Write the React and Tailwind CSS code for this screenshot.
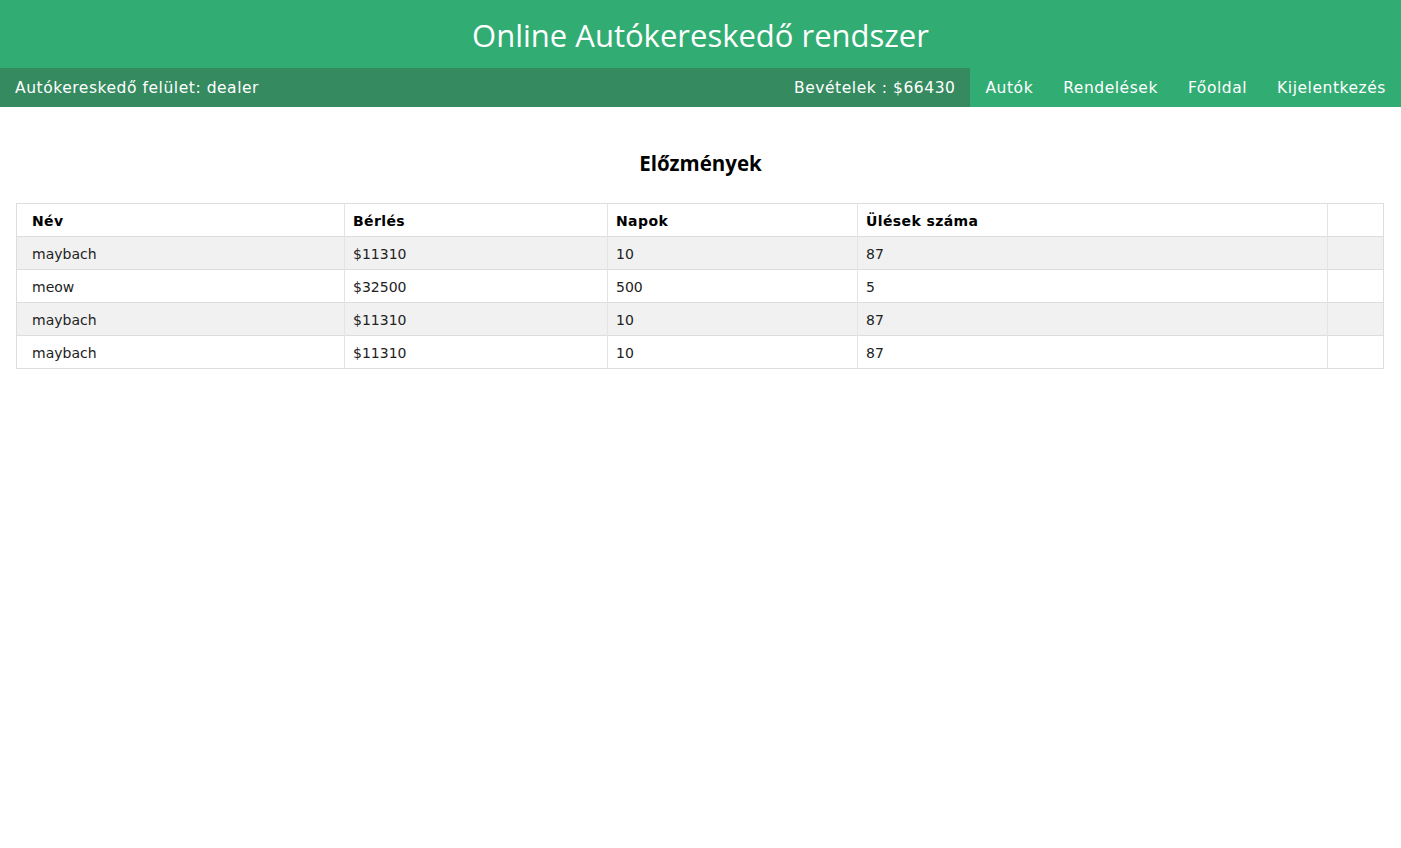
import React from "react";

const rows = [
  { name: "maybach", rent: "$11310", days: "10", seats: "87" },
  { name: "meow", rent: "$32500", days: "500", seats: "5" },
  { name: "maybach", rent: "$11310", days: "10", seats: "87" },
  { name: "maybach", rent: "$11310", days: "10", seats: "87" },
];

const navItems = ["Autók", "Rendelések", "Főoldal", "Kijelentkezés"];

function App() {
  return (
    <div className="min-h-screen bg-white font-['DejaVu_Sans',Verdana,sans-serif]">
      {/* HEADER */}
      <header className="h-[68px] bg-[#31ac73] flex items-center justify-center pt-[3px]">
        <h1 className="text-white text-[31px] font-['Open_Sans',sans-serif] font-normal">
          Online Autókereskedő rendszer
        </h1>
      </header>

      {/* NAV BAR */}
      <nav className="h-[39px] flex bg-[#358a60] text-white text-[15.5px] tracking-[0.55px]">
        <div className="flex-1 flex items-center pl-[15px] pt-[2px]">
          Autókereskedő felület: dealer
        </div>
        <div className="flex items-center px-[15px] pt-[2px]">Bevételek : $66430</div>
        <div className="flex bg-[#31ac73]">
          {navItems.map((item) => (
            <a key={item} className="flex items-center px-[15px] pt-[2px] cursor-pointer">
              {item}
            </a>
          ))}
        </div>
      </nav>

      {/* HISTORY */}
      <section className="pt-[42px]">
        <h2 className="text-center text-[20.5px] leading-7 font-bold font-['Open_Sans',sans-serif] text-black">
          Előzmények
        </h2>

        <div className="ml-4 mr-[17px] mt-[26px]">
          <table className="w-full table-fixed border-collapse border border-[#dddddd] text-[14px] leading-4">
            <colgroup>
              <col className="w-[328px]" />
              <col className="w-[263px]" />
              <col className="w-[250px]" />
              <col className="w-[470px]" />
              <col />
            </colgroup>
            <thead>
              <tr className="border-b border-[#dddddd] bg-white">
                <th className="text-left font-bold text-black pt-[9px] pb-[7px] pl-[15px] pr-2 tracking-[0.4px]">Név</th>
                <th className="text-left font-bold text-black pt-[9px] pb-[7px] px-2 border-l border-[#e4e4e4] tracking-[0.4px]">Bérlés</th>
                <th className="text-left font-bold text-black pt-[9px] pb-[7px] px-2 border-l border-[#e4e4e4] tracking-[0.4px]">Napok</th>
                <th className="text-left font-bold text-black pt-[9px] pb-[7px] px-2 border-l border-[#e4e4e4] tracking-[0.4px]">Ülések száma</th>
                <th className="border-l border-[#e4e4e4]"></th>
              </tr>
            </thead>
            <tbody>
              {rows.map((r, i) => (
                <tr
                  key={i}
                  className={`border-b border-[#dddddd] text-[#222] ${
                    i % 2 === 0 ? "bg-[#f1f1f1]" : "bg-white"
                  }`}
                >
                  <td className="pt-[9px] pb-[7px] pl-[15px] pr-2">{r.name}</td>
                  <td className="pt-[9px] pb-[7px] px-2 border-l border-[#e4e4e4]">{r.rent}</td>
                  <td className="pt-[9px] pb-[7px] px-2 border-l border-[#e4e4e4]">{r.days}</td>
                  <td className="pt-[9px] pb-[7px] px-2 border-l border-[#e4e4e4]">{r.seats}</td>
                  <td className="border-l border-[#e4e4e4]"></td>
                </tr>
              ))}
            </tbody>
          </table>
        </div>
      </section>
    </div>
  );
}

export default App;
